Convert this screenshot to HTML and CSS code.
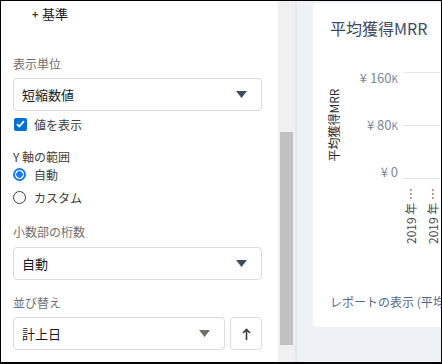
FILE: index.html
```html
<!DOCTYPE html>
<html lang="ja">
<head>
  <meta charset="UTF-8">
  <title>レポート設定</title>
  <link rel="stylesheet" href="styles.css">
</head>
<body>
  <div class="frame">
    <div class="panel">
      <div class="group-head"><span class="plus">+</span>基準</div>

      <div class="field-label first">表示単位</div>
      <div class="select">
        <span>短縮数値</span>
        <svg class="caret" width="11" height="7" viewBox="0 0 11 7"><path d="M0 0h11L5.5 7z" fill="#3e4c61"/></svg>
      </div>

      <label class="check-row">
        <span class="checkbox">
          <svg width="9" height="8" viewBox="0 0 9 8"><path d="M1 4.2l2.3 2.3L8 1.2" fill="none" stroke="#fff" stroke-width="1.8"/></svg>
        </span>
        値を表示
      </label>

      <div class="field-label axis">Y 軸の範囲</div>
      <div class="radio-row"><span class="radio on"></span>自動</div>
      <div class="radio-row second"><span class="radio"></span>カスタム</div>

      <div class="field-label digits">小数部の桁数</div>
      <div class="select">
        <span>自動</span>
        <svg class="caret" width="11" height="7" viewBox="0 0 11 7"><path d="M0 0h11L5.5 7z" fill="#3e4c61"/></svg>
      </div>

      <div class="field-label sort">並び替え</div>
      <div class="sort-row">
        <div class="select grow">
          <span>計上日</span>
          <svg class="caret" width="11" height="7" viewBox="0 0 11 7"><path d="M0 0h11L5.5 7z" fill="#706e6b"/></svg>
        </div>
        <div class="order-btn">
          <svg width="9" height="12" viewBox="0 0 9 12"><path d="M4.5 12V1.5M1 5l3.5-3.5L8 5" fill="none" stroke="#3b3b3b" stroke-width="1.6"/></svg>
        </div>
      </div>
    </div>

    <div class="scrollbar"><div class="thumb"></div></div>
    <div class="divider"></div>

    <div class="stage">
      <div class="card">
        <div class="card-title">平均獲得MRR</div>
        <div class="chart">
          <div class="y-title">平均獲得MRR</div>
          <div class="tick t1">¥ 160<small>K</small></div>
          <div class="tick t2">¥ 80<small>K</small></div>
          <div class="tick t3">¥ 0</div>
          <div class="grid g1"></div>
          <div class="grid g2"></div>
          <div class="grid g3"></div>
          <div class="x-label x1">2019 年 …</div>
          <div class="x-label x2">2019 年 …</div>
        </div>
        <div class="card-foot">レポートの表示 (平均獲得MRR)</div>
      </div>
    </div>
  </div>
</body>
</html>
```

FILE: styles.css
```css
body {
  margin: 0;
  background-color: #000000;
  font-family: "Noto Sans CJK JP", "Noto Sans", sans-serif;
}

.frame {
  margin: 1px 0 0 1px;
  width: 440px;
  height: 361px;
  display: flex;
  background-color: #eef1f6;
  overflow: hidden;
}

.panel {
  width: 277px;
  flex-shrink: 0;
  box-sizing: border-box;
  padding: 0 16px 0 12px;
  background-color: #ffffff;
  color: #181818;
}

.group-head {
  height: 26px;
  line-height: 26px;
  padding-left: 19px;
  font-size: 13px;
}

.plus {
  display: inline-block;
  width: 10px;
  font-size: 11px;
  font-weight: bold;
  color: #4a3a1e;
}

.field-label {
  font-size: 12px;
  line-height: 18px;
  color: #706e6b;
  margin-bottom: 5px;
}

.field-label.first { margin-top: 28px; }
.field-label.axis { margin-top: 16px; margin-bottom: 0; color: #3e3e3c; }
.field-label.digits { margin-top: 18px; margin-bottom: 6px; }
.field-label.sort { margin-top: 14px; }

.select {
  height: 33px;
  box-sizing: border-box;
  border: 1px solid #dddbda;
  border-radius: 4px;
  display: flex;
  align-items: center;
  justify-content: space-between;
  padding: 0 14px 0 8px;
  font-size: 13px;
}

.select.grow {
  flex: 1;
}

.caret {
  display: block;
}

.check-row {
  display: flex;
  align-items: center;
  height: 16px;
  margin-top: 5px;
  font-size: 12px;
  color: #3e3e3c;
}

.checkbox {
  width: 13px;
  height: 13px;
  border-radius: 2px;
  background-color: #0070d2;
  display: flex;
  align-items: center;
  justify-content: center;
  margin: 0 7px 0 1px;
}

.radio-row {
  display: flex;
  align-items: center;
  height: 16px;
  font-size: 12px;
  color: #3e3e3c;
}

.radio-row.second {
  margin-top: 7px;
}

.radio {
  width: 13px;
  height: 13px;
  box-sizing: border-box;
  border: 1px solid #3e3e3c;
  border-radius: 50%;
  margin: 0 8px 0 0;
}

.radio.on {
  border: 2px solid #1b7cf0;
  background: radial-gradient(circle, #1b7cf0 0 3px, #ffffff 3.5px);
}

.sort-row {
  display: flex;
  gap: 5px;
}

.order-btn {
  width: 32px;
  height: 33px;
  box-sizing: border-box;
  border: 1px solid #dddbda;
  border-radius: 4px;
  display: flex;
  align-items: center;
  justify-content: center;
}

.scrollbar {
  width: 17px;
  flex-shrink: 0;
  background-color: #f0f0f0;
}

.thumb {
  margin: 131px 2px 0 2px;
  height: 213px;
  background-color: #c1c1c1;
}

.divider {
  width: 2px;
  flex-shrink: 0;
  background-color: #e2e7f0;
}

.stage {
  flex: 1;
  padding: 2px 0 0 16px;
  min-width: 0;
}

.card {
  position: relative;
  width: 180px;
  height: 324px;
  box-sizing: border-box;
  padding: 14px 0 0 17px;
  background-color: #ffffff;
  border-radius: 4px;
}

.card-title {
  font-size: 16px;
  line-height: 22px;
  color: #3e4c66;
  white-space: nowrap;
}

.chart {
  position: absolute;
  left: 0;
  top: 0;
  width: 100%;
  height: 260px;
}

.y-title {
  position: absolute;
  left: 20px;
  top: 122px;
  transform: translate(-50%, -50%) rotate(-90deg);
  font-size: 12px;
  color: #2b2b2b;
  white-space: nowrap;
}

.tick {
  position: absolute;
  left: 25px;
  width: 60px;
  text-align: right;
  font-size: 13px;
  line-height: 14px;
  color: #7d8795;
  white-space: nowrap;
}

.tick small {
  font-size: 10px;
}

.t1 { top: 68px; }
.t2 { top: 115px; }
.t3 { top: 162px; }

.grid {
  position: absolute;
  left: 90px;
  right: 0;
  height: 1px;
  background-color: #e3e8ef;
}

.g1 { top: 69px; }
.g2 { top: 122px; }
.g3 { top: 175px; }

.x-label {
  position: absolute;
  top: 213px;
  transform: translate(-50%, -50%) rotate(-90deg);
  font-size: 12px;
  color: #4a4a4a;
  white-space: nowrap;
}

.x1 { left: 97px; }
.x2 { left: 119px; }

.card-foot {
  position: absolute;
  left: 17px;
  top: 290px;
  font-size: 12px;
  line-height: 18px;
  color: #54698d;
  white-space: nowrap;
}
```
